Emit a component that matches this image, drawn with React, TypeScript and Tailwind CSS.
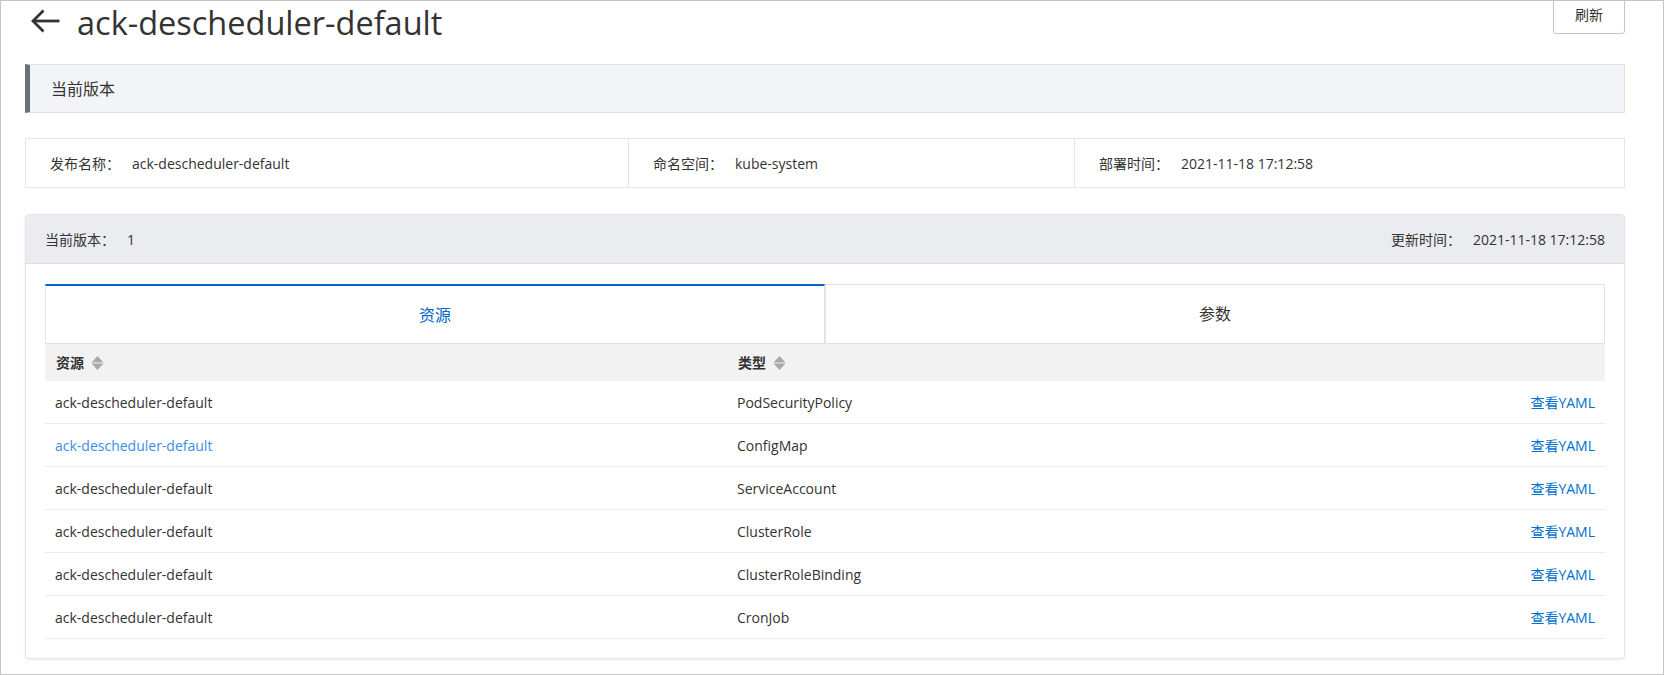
import React from 'react';

const FONT = '"Open Sans", "Noto Sans CJK SC", sans-serif';

interface ResourceRow {
  name: string;
  kind: string;
  highlight?: boolean;
}

const rows: ResourceRow[] = [
  { name: 'ack-descheduler-default', kind: 'PodSecurityPolicy' },
  { name: 'ack-descheduler-default', kind: 'ConfigMap', highlight: true },
  { name: 'ack-descheduler-default', kind: 'ServiceAccount' },
  { name: 'ack-descheduler-default', kind: 'ClusterRole' },
  { name: 'ack-descheduler-default', kind: 'ClusterRoleBinding' },
  { name: 'ack-descheduler-default', kind: 'CronJob' },
];

const infoItems = [
  { label: '发布名称：', value: 'ack-descheduler-default', width: 'w-[602px]' },
  { label: '命名空间：', value: 'kube-system', width: 'w-[446px]' },
  { label: '部署时间：', value: '2021-11-18 17:12:58', width: 'flex-1' },
];

const SortIcon = () => (
  <svg width="13" height="16" viewBox="0 0 13 16" className="ml-[7px] shrink-0">
    <path d="M0.5 7.4L6.5 1L12.5 7.4Z" fill="#a9a9a9" />
    <path d="M0.5 8.6L6.5 15L12.5 8.6Z" fill="#a9a9a9" />
  </svg>
);

const BackArrow = () => (
  <svg width="30" height="24" viewBox="0 0 30 24" className="shrink-0">
    <path d="M29.5 12H3" stroke="#333" strokeWidth="2.8" fill="none" />
    <path d="M13.5 1.5L3 12L13.5 22.5" stroke="#333" strokeWidth="2.8" fill="none" strokeLinejoin="miter" />
  </svg>
);

export default function App() {
  return (
    <div
      className="w-[1664px] h-[675px] box-border border border-[#c6c6c6] bg-white text-[#333] overflow-hidden"
      style={{ fontFamily: FONT }}
    >
      <div className="w-[1624px] pl-[24px]">
        {/* title row */}
        <div className="flex items-start justify-between">
          <div className="flex items-center h-[44px]">
            <span className="ml-[5px] mt-[-4px]">
              <BackArrow />
            </span>
            <h1 className="ml-[17px] text-[32.5px] leading-[44px] font-normal text-[#333]">ack-descheduler-default</h1>
          </div>
          <button className="-mt-[7px] h-[40px] w-[72px] border border-[#c4c6cf] rounded-b-[3px] bg-white text-[14px] text-[#333] flex items-center justify-center">
            刷新
          </button>
        </div>

        {/* current version bar */}
        <div className="mt-[19px] h-[49px] flex items-center bg-[#f3f4f7] border border-[#dfe3e8] border-l-[5px] border-l-[#6b7079] pl-[21px] text-[16px]">
          当前版本
        </div>

        {/* info box */}
        <div className="mt-[25px] h-[50px] flex border border-[#e6e6e6] bg-white text-[14px]">
          {infoItems.map((item, i) => (
            <div
              key={item.label}
              className={`${item.width} h-full flex items-center pl-[24px] ${i > 0 ? 'border-l border-[#e6e6e6]' : ''}`}
            >
              <span>{item.label}</span>
              <span className="ml-[12px]">{item.value}</span>
            </div>
          ))}
        </div>

        {/* version card */}
        <div className="mt-[26px] border border-[#e3e5e9] rounded-[4px] bg-white shadow-[0_1px_3px_rgba(0,0,0,0.08)]">
          <div className="h-[49px] flex items-center justify-between px-[19px] bg-[#ebecf0] border-b border-[#dcdee3] rounded-t-[4px] text-[14px]">
            <div>
              <span>当前版本：</span>
              <span className="ml-[12px]">1</span>
            </div>
            <div>
              <span>更新时间：</span>
              <span className="ml-[12px]">2021-11-18 17:12:58</span>
            </div>
          </div>

          <div className="px-[19px] pt-[20px] pb-[19px]">
            {/* tabs */}
            <div className="grid grid-cols-2 h-[60px] text-[16px]">
              <div className="flex items-center justify-center border border-[#e3e3e3] border-t-2 border-t-[#0064c8] text-[#0068c8]">
                资源
              </div>
              <div className="flex items-center justify-center border border-[#e3e3e3] text-[#333]">
                参数
              </div>
            </div>

            {/* table */}
            <div className="text-[14px]">
              <div className="grid grid-cols-[682px_1fr_auto] items-center h-[37px] bg-[#f2f2f2] px-[11px] font-bold">
                <div className="flex items-center">
                  资源
                  <SortIcon />
                </div>
                <div className="flex items-center">
                  类型
                  <SortIcon />
                </div>
                <div />
              </div>
              {rows.map((row, i) => (
                <div
                  key={i}
                  className="grid grid-cols-[682px_1fr_auto] items-center h-[43px] border-b border-[#ececec] px-[10px]"
                >
                  <div className={row.highlight ? 'text-[#3a8ee6]' : 'text-[#333]'}>{row.name}</div>
                  <div>{row.kind}</div>
                  <a className="text-[#0070cc] cursor-pointer">查看YAML</a>
                </div>
              ))}
            </div>
          </div>
        </div>
      </div>
    </div>
  );
}
